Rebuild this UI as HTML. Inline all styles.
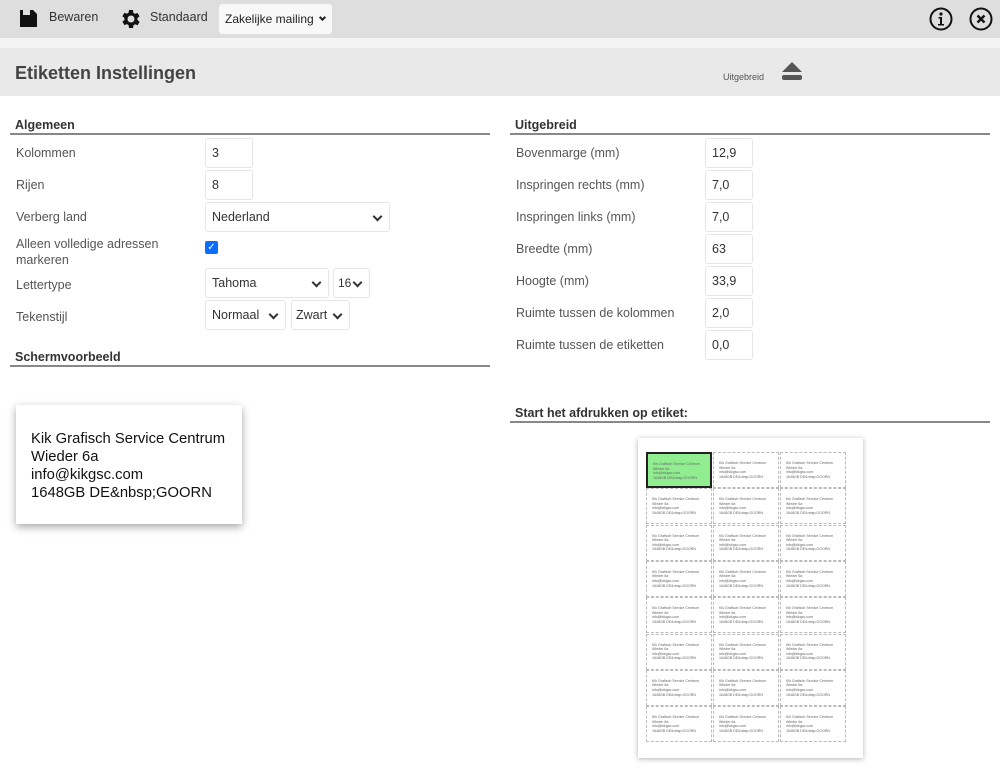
<!DOCTYPE html>
<html><head><meta charset="utf-8"><style>
*{box-sizing:border-box;margin:0;padding:0}
body{width:1000px;height:783px;background:#fff;font-family:"Liberation Sans",sans-serif;color:#444;position:relative;overflow:hidden;font-size:12.5px}
.a{position:absolute}
.tb{left:0;top:0;width:1000px;height:38px;background:#dedede}
.strip{left:0;top:38px;width:1000px;height:10px;background:#f4f4f4}
.hd{left:0;top:48px;width:1000px;height:48px;background:#e9e9e9}
.h2{font-weight:bold;font-size:12.5px;color:#333}
.line{height:2px;background:#888}
.in{position:absolute;border:1px solid #e6e6e6;border-radius:3px;background:#fff;height:30px;padding:0 6px;line-height:29px;font-size:12.5px;color:#333}
.sel::after{content:"";position:absolute;right:8px;top:10px;width:5px;height:5px;border-right:2px solid #333;border-bottom:2px solid #333;transform:rotate(45deg)}
.lbl{position:absolute;font-size:12.5px;color:#555}
.cell{position:absolute;width:66px;height:36px;border:1px dashed #bbb;font-size:3.6px;line-height:4.6px;padding:8px 0 0 5px;color:#666}
</style></head><body>
<div class="a tb"></div>
<svg class="a" style="left:19px;top:9px" width="19" height="19" viewBox="0 0 19 19"><path d="M1 1h13l4 4v13H1z" fill="#111"/><rect x="4" y="1" width="7" height="5" fill="#dedede"/></svg>
<div class="a" style="left:49px;top:10px;font-size:12.5px;color:#333">Bewaren</div>
<svg class="a" style="left:119px;top:7px" width="24" height="24" viewBox="0 0 24 24"><path fill="#111" d="M19.4 13a7.5 7.5 0 000-2l2.1-1.6-2-3.5-2.5 1a7 7 0 00-1.7-1L15 3h-4l-.4 2.7a7 7 0 00-1.7 1l-2.5-1-2 3.5L6.5 11a7.5 7.5 0 000 2l-2.1 1.6 2 3.5 2.5-1a7 7 0 001.7 1L11 21h4l.4-2.7a7 7 0 001.7-1l2.5 1 2-3.5zM13 15.5a3.5 3.5 0 110-7 3.5 3.5 0 010 7z" transform="translate(-1 0)"/></svg>
<div class="a" style="left:150px;top:10px;font-size:12.5px;color:#333">Standaard</div>
<div class="a" style="left:219px;top:4px;width:113px;height:30px;background:#f8f8f8;border-radius:3px;font-size:12px;color:#222;line-height:31px;padding-left:6px">Zakelijke mailing</div>
<div class="a" style="left:320px;top:15px;width:5px;height:5px;border-right:2px solid #222;border-bottom:2px solid #222;transform:rotate(45deg)"></div>
<svg class="a" style="left:929px;top:7px" width="24" height="24" viewBox="0 0 24 24"><circle cx="12" cy="12" r="10.5" fill="none" stroke="#111" stroke-width="2"/><circle cx="12" cy="7" r="1.6" fill="#111"/><path d="M9.5 10h3.5v7h2v1.5h-6V17h2v-5.5h-1.5z" fill="#111"/></svg>
<svg class="a" style="left:969px;top:7px" width="24" height="24" viewBox="0 0 24 24"><circle cx="12" cy="12" r="10.5" fill="none" stroke="#111" stroke-width="2"/><path d="M8.5 8.5l7 7M15.5 8.5l-7 7" stroke="#111" stroke-width="2.4"/></svg>
<div class="a strip"></div>
<div class="a hd"></div>
<div class="a" style="left:15px;top:63px;font-size:18px;font-weight:bold;color:#444">Etiketten Instellingen</div>
<div class="a" style="left:723px;top:72px;font-size:9px;color:#555">Uitgebreid</div>
<svg class="a" style="left:781px;top:61px" width="22" height="21" viewBox="0 0 22 21"><path d="M11 1l10 10H1z" fill="#555"/><rect x="1" y="14" width="20" height="5" rx="2" fill="#555"/></svg>

<div class="a h2" style="left:15px;top:118px">Algemeen</div>
<div class="a line" style="left:10px;top:133px;width:480px"></div>
<div class="lbl" style="left:16px;top:146px">Kolommen</div><div class="in" style="left:205px;top:138px;width:48px">3</div>
<div class="lbl" style="left:16px;top:178px">Rijen</div><div class="in" style="left:205px;top:170px;width:48px">8</div>
<div class="lbl" style="left:16px;top:210px">Verberg land</div><div class="in sel" style="left:205px;top:202px;width:185px">Nederland</div>
<div class="lbl" style="left:16px;top:236px;line-height:16px">Alleen volledige adressen<br>markeren</div>
<div class="a" style="left:205px;top:241px;width:13px;height:13px;background:#0d6efd;border-radius:2px;color:#fff;font-size:10px;line-height:13px;text-align:center">&#10003;</div>
<div class="lbl" style="left:16px;top:278px">Lettertype</div><div class="in sel" style="left:205px;top:268px;width:124px">Tahoma</div><div class="in sel" style="left:333px;top:268px;width:37px;padding-left:4px;font-size:12px">16</div>
<div class="lbl" style="left:16px;top:310px">Tekenstijl</div><div class="in sel" style="left:205px;top:300px;width:81px">Normaal</div><div class="in sel" style="left:291px;top:300px;width:59px;padding-left:4px">Zwart</div>
<div class="a h2" style="left:15px;top:350px">Schermvoorbeeld</div>
<div class="a line" style="left:10px;top:365px;width:480px"></div>
<div class="a" style="left:16px;top:405px;width:226px;height:119px;background:#fff;box-shadow:0 3px 8px rgba(0,0,0,.35);padding:25px 0 0 15px;font-size:14.8px;line-height:18px;color:#111">Kik Grafisch Service Centrum<br>Wieder 6a<br>info@kikgsc.com<br>1648GB DE&amp;nbsp;GOORN</div>

<div class="a h2" style="left:515px;top:118px">Uitgebreid</div>
<div class="a line" style="left:510px;top:133px;width:480px"></div>
<div class="lbl" style="left:516px;top:146px">Bovenmarge (mm)</div><div class="in" style="left:705px;top:138px;width:48px">12,9</div>
<div class="lbl" style="left:516px;top:178px">Inspringen rechts (mm)</div><div class="in" style="left:705px;top:170px;width:48px">7,0</div>
<div class="lbl" style="left:516px;top:210px">Inspringen links (mm)</div><div class="in" style="left:705px;top:202px;width:48px">7,0</div>
<div class="lbl" style="left:516px;top:242px">Breedte (mm)</div><div class="in" style="left:705px;top:234px;width:48px">63</div>
<div class="lbl" style="left:516px;top:274px">Hoogte (mm)</div><div class="in" style="left:705px;top:266px;width:48px">33,9</div>
<div class="lbl" style="left:516px;top:306px">Ruimte tussen de kolommen</div><div class="in" style="left:705px;top:298px;width:48px">2,0</div>
<div class="lbl" style="left:516px;top:338px">Ruimte tussen de etiketten</div><div class="in" style="left:705px;top:330px;width:48px">0,0</div>
<div class="a h2" style="left:515px;top:406px">Start het afdrukken op etiket:</div>
<div class="a line" style="left:510px;top:421px;width:480px"></div>
<div class="a" style="left:638px;top:438px;width:225px;height:320px;background:#fff;box-shadow:0 1px 5px rgba(0,0,0,.3)"></div>
<div id="g"></div>
<script>
var h='';for(var r=0;r<8;r++)for(var c=0;c<3;c++){var x=646+c*67,y=452+r*36.3;var s=(r==0&&c==0)?'background:#90ee90;border:2px solid #222;':'';h+='<div class="cell" style="left:'+x+'px;top:'+y+'px;'+s+'">Kik Grafisch Service Centrum<br>Wieder 6a<br>info@kikgsc.com<br>1648GB DE&amp;nbsp;GOORN</div>';}
document.getElementById('g').innerHTML=h;
</script>
</body></html>
